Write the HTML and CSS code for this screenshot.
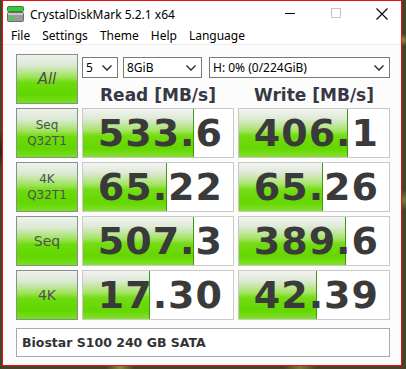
FILE: index.html
```html
<!DOCTYPE html>
<html lang="en">
<head>
    <meta charset="UTF-8">
    <meta name="viewport" content="width=device-width, initial-scale=1.0">
    <title>CrystalDiskMark 5.2.1 x64</title>
    <link rel="stylesheet" href="styles.css">
</head>
<body>
    <div class="window">
        <div class="titlebar">
            <svg class="app-icon" width="17" height="16" viewBox="0 0 17 16">
                <rect x="0.5" y="0.5" width="16" height="5" rx="1" fill="#3cc43c" stroke="#2a8f2a"/>
                <rect x="0.5" y="6.5" width="16" height="9" rx="1" fill="#9a9a9a" stroke="#6a6a6a"/>
                <rect x="1" y="7" width="15" height="2" fill="#c8c8c8"/>
                <rect x="2" y="11" width="5" height="3" fill="#3cd83c"/>
            </svg>
            <span class="title">CrystalDiskMark 5.2.1 x64</span>
            <div class="controls">
                <svg class="ctl" width="46" height="26" viewBox="0 0 46 26"><line x1="22" y1="12.5" x2="32" y2="12.5" stroke="#000"/></svg>
                <svg class="ctl" width="46" height="26" viewBox="0 0 46 26"><rect x="22.5" y="7.5" width="9" height="9" fill="none" stroke="#c4c4c4"/></svg>
                <svg class="ctl" width="46" height="26" viewBox="0 0 46 26"><path d="M21.5 7.5 L32.5 18.5 M32.5 7.5 L21.5 18.5" stroke="#000" stroke-width="1.1"/></svg>
            </div>
        </div>

        <div class="menubar">
            <span class="menu-item">File</span>
            <span class="menu-item">Settings</span>
            <span class="menu-item">Theme</span>
            <span class="menu-item">Help</span>
            <span class="menu-item">Language</span>
        </div>

        <div class="client">
            <div class="board">
                <div class="label all">All</div>
                <div class="top">
                    <div class="selects">
                        <div class="select count">5 <svg width="10" height="6" viewBox="0 0 10 6"><polyline points="0.5,0.5 5,5 9.5,0.5" fill="none" stroke="#222" stroke-width="1.3"/></svg></div>
                        <div class="select size">8GiB <svg width="10" height="6" viewBox="0 0 10 6"><polyline points="0.5,0.5 5,5 9.5,0.5" fill="none" stroke="#222" stroke-width="1.3"/></svg></div>
                        <div class="select drive">H: 0% (0/224GiB) <svg width="10" height="6" viewBox="0 0 10 6"><polyline points="0.5,0.5 5,5 9.5,0.5" fill="none" stroke="#222" stroke-width="1.3"/></svg></div>
                    </div>
                    <div class="head">Read [MB/s]</div>
                    <div class="head">Write [MB/s]</div>
                </div>

                <div class="label two">Seq<br>Q32T1</div>
                <div class="meter" style="--fill: 111px">533.6</div>
                <div class="meter" style="--fill: 109px">406.1</div>

                <div class="label two">4K<br>Q32T1</div>
                <div class="meter" style="--fill: 84px">65.22</div>
                <div class="meter" style="--fill: 84px">65.26</div>

                <div class="label">Seq</div>
                <div class="meter" style="--fill: 111px">507.3</div>
                <div class="meter" style="--fill: 107px">389.6</div>

                <div class="label">4K</div>
                <div class="meter" style="--fill: 67px">17.30</div>
                <div class="meter" style="--fill: 78px">42.39</div>
            </div>

            <div class="comment">Biostar S100 240 GB SATA</div>
        </div>
    </div>
</body>
</html>
```

FILE: styles.css
```css
body {
    margin: 0;
    padding: 0;
    height: 369px;
    overflow: hidden;
    background-color: #4a4226;
    background-image:
        radial-gradient(circle at 403px 40px, #9a8a48 0, transparent 6px),
        radial-gradient(circle at 404px 200px, #7c7a3a 0, transparent 10px),
        radial-gradient(circle at 120px 368px, #8a8a44 0, transparent 14px),
        radial-gradient(circle at 300px 368px, #7a7a3c 0, transparent 16px),
        radial-gradient(circle at 0 150px, #2a2418 0, transparent 20px);
}

.window {
    box-sizing: border-box;
    width: 400px;
    height: 366px;
    margin-left: 2px;
    border: 1px solid #e81212;
    background: #fcfcfc;
    font-family: "Noto Sans", "Open Sans", sans-serif;
    color: #000;
}

.titlebar {
    display: flex;
    align-items: center;
    height: 26px;
    background: #fff;
}

.app-icon {
    margin-left: 4px;
    margin-right: 6px;
}

.title {
    font-size: 12px;
    flex: 1;
}

.controls {
    display: flex;
    align-self: flex-start;
}

.ctl {
    display: block;
}

.menubar {
    display: flex;
    height: 17px;
    align-items: center;
    background: #fff;
    border-bottom: 1px solid #ececec;
    font-size: 12px;
    padding-left: 2px;
}

.menu-item {
    padding: 0 6px;
}

.client {
    padding: 9px 0 0 13px;
}

.board {
    display: grid;
    grid-template-columns: 62px 152px 152px;
    grid-template-rows: repeat(5, 50px);
    gap: 4px;
}

.label {
    box-sizing: border-box;
    display: flex;
    align-items: center;
    justify-content: center;
    text-align: center;
    border: 1px solid #87918a;
    background: linear-gradient(to bottom, #eef2ec 0%, #dbe9d4 22%, #9ee35a 46%, #6cdb0c 58%, #62d600 82%, #78e020 100%);
    font-family: "DejaVu Sans", sans-serif;
    font-size: 14px;
    color: #505050;
}

.label.two {
    font-size: 12px;
    line-height: 16px;
}

.label.all {
    font-size: 15px;
    font-style: italic;
}

.top {
    grid-column: 2 / 4;
    display: grid;
    grid-template-columns: 152px 152px;
    grid-template-rows: 21px 1fr;
    column-gap: 4px;
    padding-top: 3px;
}

.selects {
    grid-column: 1 / 3;
    display: flex;
}

.select {
    box-sizing: border-box;
    display: flex;
    align-items: center;
    justify-content: space-between;
    height: 21px;
    padding: 0 5px 0 3px;
    border: 1px solid #7a7a7a;
    background: #fff;
    font-size: 12px;
}

.select.count {
    width: 36px;
}

.select.size {
    width: 79px;
    margin-left: 5px;
}

.select.drive {
    width: 181px;
    margin-left: 7px;
}

.head {
    display: flex;
    align-items: flex-end;
    justify-content: center;
    font-family: "DejaVu Sans", sans-serif;
    font-weight: bold;
    font-size: 17px;
    line-height: 17px;
    color: #383844;
}

.meter {
    box-sizing: border-box;
    border: 1px solid #c9c9c9;
    background-color: #fff;
    background-image:
        linear-gradient(#3e9a10, #3e9a10),
        linear-gradient(to bottom, #f2f4f0 0%, #dfe9d8 20%, #a8e46a 44%, #74dc12 56%, #64d600 82%, #84e22c 100%);
    background-size: 1px 100%, var(--fill) 100%;
    background-position: calc(var(--fill) - 1px) 0, 0 0;
    background-repeat: no-repeat;
    padding: 1px 10px 0 0;
    text-align: right;
    font-family: "DejaVu Sans", sans-serif;
    font-weight: bold;
    font-size: 38px;
    letter-spacing: 1px;
    line-height: 47px;
    color: #3a3a3a;
}

.comment {
    box-sizing: border-box;
    width: 374px;
    height: 29px;
    margin-top: 8px;
    padding-left: 5px;
    border: 1px solid #a9a9a9;
    background: #fff;
    font-family: "DejaVu Sans", sans-serif;
    font-weight: bold;
    font-size: 12.5px;
    line-height: 27px;
    color: #333;
}
```
